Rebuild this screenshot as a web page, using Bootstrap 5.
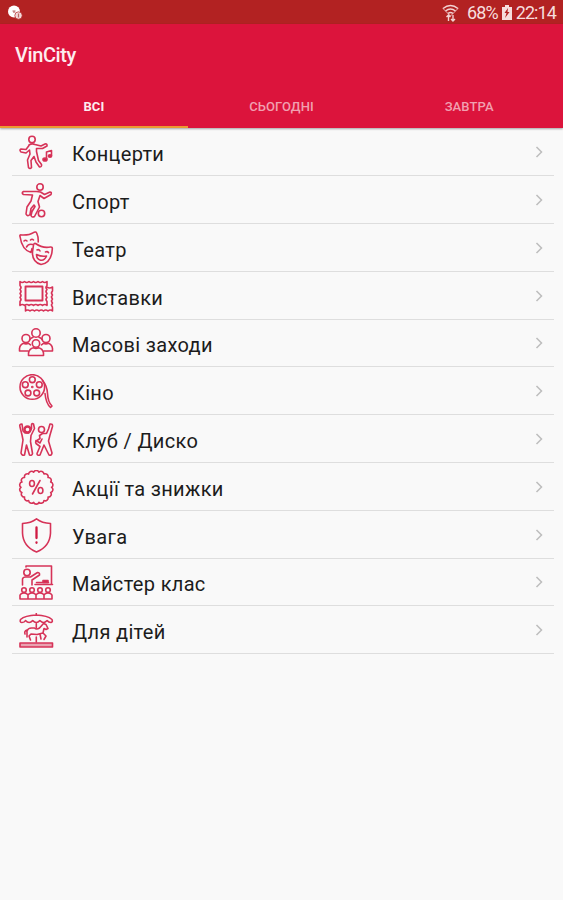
<!DOCTYPE html>
<html lang="uk">
<head>
<meta charset="utf-8">
<meta name="viewport" content="width=device-width, initial-scale=1">
<title>VinCity</title>
<link rel="stylesheet" href="https://cdn.jsdelivr.net/npm/bootstrap@5.3.0/dist/css/bootstrap.min.css">
<style>
body{font-family:Roboto,"Noto Sans",sans-serif;background:#f9f9f9;color:#1c1c1c;min-height:900px;overflow:hidden}
.statusbar{height:24px;background:#b22222;color:#f6dddd;font-size:18px;line-height:24px;padding:1px 7px 0 7px}
.stat{letter-spacing:-.9px}
.appbar{height:104px;background:#dc143c;color:#fff;box-shadow:0 1px 2px rgba(0,0,0,.35);position:relative}
.apptitle{height:61px;padding-left:15px;font-size:20px;font-weight:500;color:#fdecef;letter-spacing:-.4px}
.tabs{height:43px}
.tabs a{font-size:13px;font-weight:500;color:#f1a0b0;border-bottom:2px solid transparent;text-decoration:none;padding-top:2px;letter-spacing:.1px}
.tabs a.current{color:#fdecef;border-color:#ec9a30;font-weight:700}
.events{padding:.4px 9px 0 12px}
.event{height:47.8px;border-bottom:1px solid #dedede;color:inherit;text-decoration:none;padding:0 11px 0 6px}
.event .pic{width:36px;height:36px;margin-top:3px;fill:none;stroke:#d63358;stroke-width:1.6;stroke-linecap:round;stroke-linejoin:round}
.event .label{font-size:20px;margin-left:18px;padding-top:5px;letter-spacing:.33px;line-height:24px}
.chev{width:8px;height:14px;fill:none;stroke:#bdbdbd;stroke-width:1.5;margin-top:1px}
.solid{fill:#d3234a}
</style>
<script src="https://cdn.jsdelivr.net/npm/bootstrap@5.3.0/dist/js/bootstrap.bundle.min.js"></script>
</head>
<body>
<div class="statusbar d-flex align-items-center justify-content-between">
  <svg width="16" height="16" viewBox="0 0 16 16"><circle cx="7" cy="6.500" r="6" fill="#fff"/><path d="M5.500 6h3M7 6v2" stroke="#b86a6a" stroke-width="1.200" fill="none"/><circle cx="11.500" cy="10.500" r="3.700" fill="#f3d9d9" stroke="#b22222" stroke-width=".7"/><path d="M11.500 8.500v4" stroke="#b86a6a" stroke-width="1.200"/></svg>
  <div class="d-flex align-items-center">
    <svg width="17" height="18" viewBox="0 0 17 18" fill="none" stroke="#f3d3d3" stroke-width="1.500"><path d="M1 4.500Q8.500-1.500 16 4.500M3.500 7Q8.500 3 13.500 7M6 9.500q2.500-2 5 0"/><path d="M1 4.500l7.500 7.500L16 4.500" stroke-width=".8"/><path d="M6.500 17v-6m-2 2l2-2 2 2M11 11v6m-2-2l2 2 2-2" stroke-width="1.400"/></svg>
    <span class="stat ms-2">68%</span>
    <svg class="ms-1 me-1" width="10" height="15" viewBox="0 0 10 15"><path d="M3 0h4v2h3v13H0V2h3z" fill="#f6dddd"/><path d="M6 3L2.500 8h2L3 13l4.500-6h-2z" fill="#b22222"/></svg>
    <span class="stat">22:14</span>
  </div>
</div>
<header class="appbar">
  <div class="apptitle d-flex align-items-center">VinCity</div>
  <nav class="tabs d-flex">
    <a class="current col-4 d-flex align-items-center justify-content-center" href="#">ВСІ</a>
    <a class="col-4 d-flex align-items-center justify-content-center" href="#">СЬОГОДНІ</a>
    <a class="col-4 d-flex align-items-center justify-content-center" href="#">ЗАВТРА</a>
  </nav>
</header>
<main class="events d-flex flex-column">
  <a class="event d-flex align-items-center" href="#">
    <svg class="pic" viewBox="0 0 36 36"><circle cx="14" cy="4.500" r="3.200"/><path d="M11 10.500l-3 4-5-.5q-2 1 0 3l5 1 3.500-3 .5 4-2.500 6 1 7.500q1.500 2 3 0l-.5-7 3-4 2 5.500 3.500 5q2.500 0 2-2.500l-3-4-2-9v-3l6 0 4.500-2.500q.5-2.500-2-2l-4 2-6-1.500q-3-1.500-6 .5z"/><path d="M28.500 24v-7l5-1.500v5"/><ellipse class="solid" cx="27" cy="24.500" rx="2" ry="1.500"/><ellipse class="solid" cx="32" cy="21" rx="1.600" ry="1.200"/></svg>
    <span class="label flex-grow-1">Концерти</span><svg class="chev" viewBox="0 0 8 14"><path d="M1.500 2l5 5-5 5"/></svg></a>
  <a class="event d-flex align-items-center" href="#">
    <svg class="pic" viewBox="0 0 36 36"><circle cx="22" cy="4" r="3.200"/><path d="M18.500 8.500h-13q-2.500 1.500 0 3l9 .5-1.500 6-4 6-1 7q1.500 3 4 .5l1-6 3-3.500 1 1.500-3 5-1 4q1 2.500 3.500 1l5-9.500-1.500-5.500 2-6 4 3 7-4q1-2.500-1-2.500l-5.500 2.500-4-2.500z"/><circle cx="23.500" cy="30.500" r="3.200"/></svg>
    <span class="label flex-grow-1">Спорт</span><svg class="chev" viewBox="0 0 8 14"><path d="M1.500 2l5 5-5 5"/></svg></a>
  <a class="event d-flex align-items-center" href="#">
    <svg class="pic" viewBox="0 0 36 36"><path d="M13 21.500Q4 19 2 5.500q-.5-2 1.500-1.500Q11 4.500 16 1.300q2-1 2.700.7 1.800 4 1.500 9M13 21.500l1-4"/><path d="M6 10q1.500-1.500 3 0M12.500 9q1.500-1.500 3 0M8.500 16q2-3.500 6-2.500"/><path d="M17.500 12.500q7 5 15 3.500 2-.2 1.800 2Q33.500 32 23 33.500 14 31 14.500 21l1-7q.5-2 2-1.500z"/><path d="M19 19q2-1 3 1M27.500 21q2-1 3 .7M18.500 23.500q5 2.500 10 1.500-2 5-6 4.200-4-1.200-4-5.700z"/></svg>
    <span class="label flex-grow-1">Театр</span><svg class="chev" viewBox="0 0 8 14"><path d="M1.500 2l5 5-5 5"/></svg></a>
  <a class="event d-flex align-items-center" href="#">
    <svg class="pic" viewBox="0 0 36 36"><path d="M2 2.500q2.200 2 4.500 0 2.200 2 4.500 0 2.200 2 4.500 0 2.200 2 4.500 0 2.200 2 4.500 0 2.200 2 4.500 0v4q-2 2 0 4-2 2 0 4-2 2 0 4-2 2 0 4v4q-2.200-2-4.500 0-2.200-2-4.500 0-2.200-2-4.500 0-2.200-2-4.500 0-2.200-2-4.500 0-2.200-2-4.500 0v-4q2-2 0-4 2-2 0-4 2-2 0-4 2-2 0-4z"/><path d="M7.500 7.500h17v14h-17z" stroke-width="1.900"/><path d="M29 8q2.500 2 5.500 0v4q-2 2 0 4-2 2 0 4-2 2 0 4-2 2 0 4v4q-2.200-2-4.500 0-2.200-2-4.500 0-2.200-2-4.500 0-2.200-2-4.500 0-2.200-2-4.500 0-2.200-2-4.500 0v-5"/></svg>
    <span class="label flex-grow-1">Виставки</span><svg class="chev" viewBox="0 0 8 14"><path d="M1.500 2l5 5-5 5"/></svg></a>
  <a class="event d-flex align-items-center" href="#">
    <svg class="pic" viewBox="0 0 36 36"><circle cx="18" cy="7" r="4.200"/><circle cx="8" cy="12.500" r="4"/><circle cx="28" cy="12.500" r="4"/><circle cx="18" cy="17.500" r="3.700"/><path d="M10.500 29.500v-2.500q1-4.500 5-5.200 2.500 1.300 5 0 4 .7 5 5.200v2.500zM10 25H1.500v-2.500q.5-4 4-5.200 2.500 1.200 5 0l2 1.500M26 25h8.500v-2.500q-.5-4-4-5.200-2.500 1.200-5 0l-2 1.500M11.500 14q1-2 3.500-2.800M24.500 14q-1-2-3.500-2.800"/></svg>
    <span class="label flex-grow-1">Масові заходи</span><svg class="chev" viewBox="0 0 8 14"><path d="M1.500 2l5 5-5 5"/></svg></a>
  <a class="event d-flex align-items-center" href="#">
    <svg class="pic" viewBox="0 0 36 36"><circle cx="14.300" cy="13" r="12.300"/><circle cx="14.300" cy="5.700" r="2.900"/><circle cx="7.300" cy="10.700" r="2.900"/><circle cx="21.300" cy="10.700" r="2.900"/><circle cx="10" cy="19" r="2.900"/><circle cx="18.700" cy="19" r="2.900"/><circle cx="14.300" cy="13" r=".5"/><path d="M24.500 6.500q4.500 5 5 13 .5 9 4.500 12.500l-1.500 1.500q-4.500-4-5.500-14"/></svg>
    <span class="label flex-grow-1">Кіно</span><svg class="chev" viewBox="0 0 8 14"><path d="M1.500 2l5 5-5 5"/></svg></a>
  <a class="event d-flex align-items-center" href="#">
    <svg class="pic" viewBox="0 0 36 36"><circle cx="9.500" cy="7.500" r="3" stroke-width="2.400"/><path d="M4 2q-3 0-2 3l2 8 1 5-2 13q1 3 3.500 2l2-10 3 10q2.500 1 3-1.500l-2-12 .5-6 3.500-7-1-4.500q-2-1-2 1l0 3.500-3 4.500H7L5 9z"/><circle cx="23.500" cy="7.500" r="3"/><path d="M32 2q3-.5 2.500 2.500L32 13l-1.500 6 3.500 12q-.5 3-3 2l-5-10-4 10q-3 1-3-1.500l3-7-4-3q-1-2 1-3l3-2-.5-3 3-2h4l2-4.500z"/><path d="M18 18.500l4 2.500 2-4"/></svg>
    <span class="label flex-grow-1">Клуб / Диско</span><svg class="chev" viewBox="0 0 8 14"><path d="M1.500 2l5 5-5 5"/></svg></a>
  <a class="event d-flex align-items-center" href="#">
    <svg class="pic" viewBox="0 0 36 36"><path id="scallop"/><ellipse cx="14" cy="13.500" rx="2.400" ry="3"/><ellipse cx="22.500" cy="20.500" rx="2.400" ry="3"/><path d="M22 10.500l-7.500 13.500"/></svg>
    <span class="label flex-grow-1">Акції та знижки</span><svg class="chev" viewBox="0 0 8 14"><path d="M1.500 2l5 5-5 5"/></svg></a>
  <a class="event d-flex align-items-center" href="#">
    <svg class="pic" viewBox="0 0 36 36"><path d="M18.500.800Q13 5 4.500 5.500V15q.5 13.500 14 19 13.500-5.500 14-19V5.500Q24 5 18.500.800z"/><path d="M18.500 9.500v10.500M18.500 24.500v.3" stroke="#cf1a42" stroke-width="2.300"/></svg>
    <span class="label flex-grow-1">Увага</span><svg class="chev" viewBox="0 0 8 14"><path d="M1.500 2l5 5-5 5"/></svg></a>
  <a class="event d-flex align-items-center" href="#">
    <svg class="pic" viewBox="0 0 36 36"><path d="M8 2V1h25.500v18"/><circle cx="9" cy="7.500" r="3.200"/><path d="M4.500 20v-6q.5-2 3-2h5l7-4.500q2.500 0 2 2.500l-7.500 5v5M17 19.500h17.500M18.500 17.500h12"/><path class="solid" d="M25 15.500h5v2h-5z"/><circle cx="6" cy="25" r="2.300"/><circle cx="14" cy="25" r="2.300"/><circle cx="22" cy="25" r="2.300"/><circle cx="30" cy="25" r="2.300"/><path d="M2 34v-4q1-2 4-2t4 2q1-2 4-2t4 2q1-2 4-2t4 2q1-2 4-2t4 2v4zM10 30v4M18 30v4M26 30v4"/></svg>
    <span class="label flex-grow-1">Майстер клас</span><svg class="chev" viewBox="0 0 8 14"><path d="M1.500 2l5 5-5 5"/></svg></a>
  <a class="event d-flex align-items-center" href="#">
    <svg class="pic" viewBox="0 0 36 36"><path d="M18.300.5v1.500Q7 2.500 2.500 6.500q-1 3 1.500 3 2.500 0 3.500-2 1.800 2 3.600 2t3.600-2q1.800 2 3.600 2t3.600-2q1.800 2 3.600 2t3.600-2q1.500 2 3.900 2 2-.5 1-3Q29.500 2.500 18.300 2M18.300 9.500V15M18.300 24v5"/><path d="M9 24v-6q1-3 4.500-3h3q2 2 5 0l4-4.500 2.500 1 2 4-2 1-2-1-1 4.500 3 3-2 3.500M25 20l-6 1.500-6-.5-2 2 1.500 4M9 17q-3 1-2 4M22 21l1 5"/><path d="M2 30h32.500v4H2z" fill="#e9a3b1"/></svg>
    <span class="label flex-grow-1">Для дітей</span><svg class="chev" viewBox="0 0 8 14"><path d="M1.500 2l5 5-5 5"/></svg></a>
</main>
<script>
// Scalloped rim of the discount badge: 18 shallow arcs round a circle.
var d='';
for(var i=0;i<=18;i++){var a=i*Math.PI/9,x=(18.3+15.3*Math.cos(a)).toFixed(2),y=(17.3+15.3*Math.sin(a)).toFixed(2);d+=(i?'A2.900 2.900 0 0 1 ':'M')+x+' '+y;}
document.getElementById('scallop').setAttribute('d',d);
</script>
</body>
</html>
